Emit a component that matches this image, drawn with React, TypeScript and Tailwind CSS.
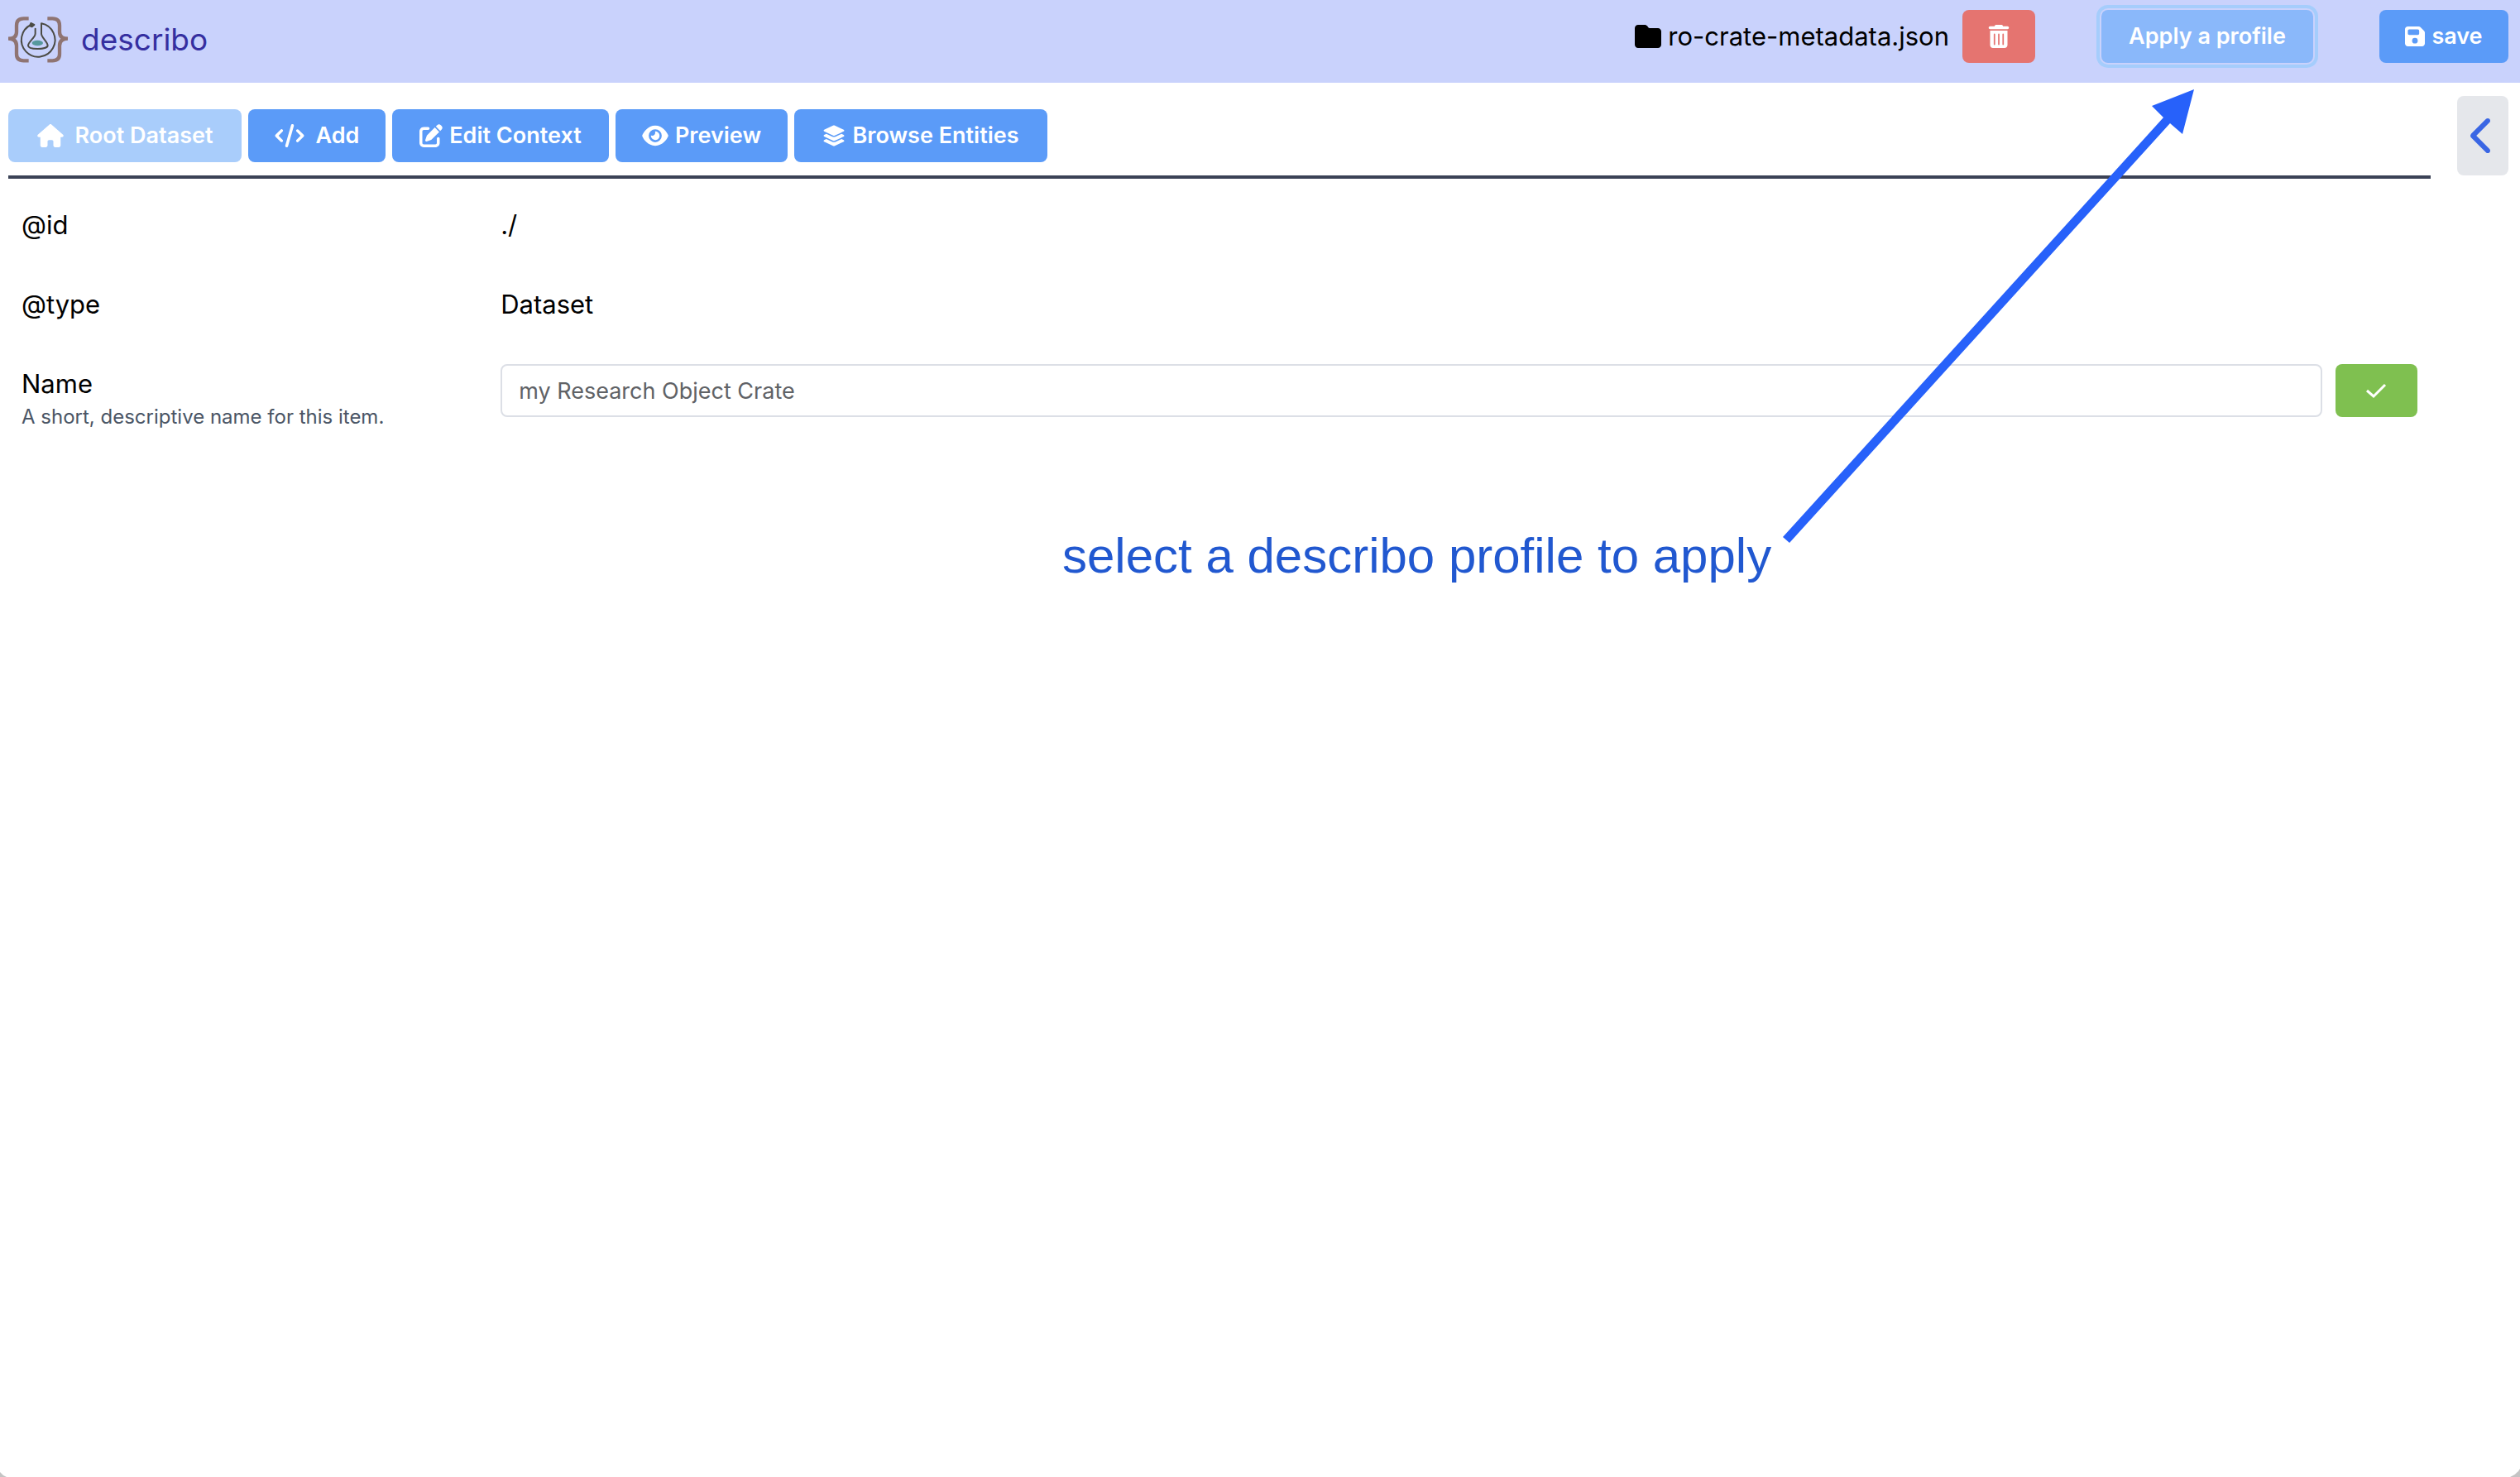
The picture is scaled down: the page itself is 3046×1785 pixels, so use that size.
import type { ReactNode } from "react";
import {
  FaChevronLeft,
  FaCode,
  FaEye,
  FaFloppyDisk,
  FaFolder,
  FaHouse,
  FaLayerGroup,
  FaPenToSquare,
  FaTrashCan,
} from "react-icons/fa6";

function Logo() {
  return (
    <svg viewBox="0 0 216 168" className="h-14 w-[72px]" fill="none" aria-hidden="true">
      <g stroke="#8f7472" strokeWidth="13">
        <path d="M74 7H56Q30 7 30 32V56Q30 80 0 80Q30 80 30 106V136Q30 160 56 160H74" />
        <path d="M142 7H160Q186 7 186 32V56Q186 80 216 80Q186 80 186 106V136Q186 160 160 160H142" />
      </g>
      <g stroke="#4b4b45" strokeWidth="6" strokeLinecap="round" strokeLinejoin="round">
        <path d="M82 30A61 61 0 1 0 120 25V62C120 76 143 92 143 105C143 113 125 117 106 117C88 117 72 113 72 105C72 92 98 76 98 62V44" />
        <path d="M82 24L94 30L86 37L78 34Z" fill="#4b4b45" />
      </g>
      <ellipse cx="106" cy="96" rx="20" ry="10" fill="#56989c" />
    </svg>
  );
}

function ToolButton({
  icon,
  children,
  width,
  wide = false,
  disabled = false,
}: {
  icon: ReactNode;
  children: ReactNode;
  width: string;
  wide?: boolean;
  disabled?: boolean;
}) {
  return (
    <button
      type="button"
      disabled={disabled}
      className={`flex h-16 items-center justify-center rounded-lg text-[27px] font-semibold text-white ${width} ${
        wide ? "gap-3.5" : "gap-2"
      } ${disabled ? "bg-[#a9cdfb]" : "bg-[#5b9bf8]"}`}
    >
      {icon}
      {children}
    </button>
  );
}

function Row({ label, help, htmlFor, children }: { label: string; help?: string; htmlFor?: string; children: ReactNode }) {
  return (
    <div className="flex px-4 py-6">
      <div className="w-1/5">
        <label htmlFor={htmlFor} className="block leading-[48px]">
          {label}
        </label>
        {help && <p className="text-2xl leading-8 text-gray-600">{help}</p>}
      </div>
      <div className="w-4/5 leading-[48px]">{children}</div>
    </div>
  );
}

export default function App() {
  return (
    <div className="relative min-h-screen overflow-hidden bg-white font-[Inter,sans-serif] text-[31px] text-black">
      <header className="flex h-[100px] items-start bg-[#c9d2fc] pr-[14px] pl-[10px] pt-3">
        <div className="flex items-center gap-4 pt-2">
          <Logo />
          <h1 className="text-[37px] leading-[56px] text-[#352fa0]">describo</h1>
        </div>
        <div className="ml-auto flex items-center">
          <FaFolder className="mr-2 size-8" />
          <span>ro-crate-metadata.json</span>
          <button
            type="button"
            aria-label="Delete file"
            className="ml-4 flex h-16 w-[88px] items-center justify-center rounded-lg bg-[#e57470] text-white"
          >
            <FaTrashCan className="size-7" />
          </button>
          <button
            type="button"
            className="ml-20 h-16 w-64 rounded-lg bg-[#8ab8fa] text-[27px] font-semibold text-white outline-4 outline-offset-2 outline-[#a5cdfc]"
          >
            Apply a profile
          </button>
          <button
            type="button"
            className="ml-20 flex h-16 w-[156px] items-center justify-center gap-2 rounded-lg bg-[#5b9bf8] text-[27px] font-semibold text-white"
          >
            <FaFloppyDisk className="h-7 w-6" />
            save
          </button>
        </div>
      </header>

      <main className="flex items-start gap-8 pt-4 pr-[14px] pl-[10px]">
        <div className="min-w-0 flex-1">
          <nav className="flex gap-2 border-b-4 border-[#3b4256] pt-4 pb-4">
            <ToolButton icon={<FaHouse className="h-7 w-8" />} width="w-[282px]" wide disabled>
              Root Dataset
            </ToolButton>
            <ToolButton icon={<FaCode className="h-7 w-9" />} width="w-[166px]" wide>
              Add
            </ToolButton>
            <ToolButton icon={<FaPenToSquare className="size-7" />} width="w-[262px]">
              Edit Context
            </ToolButton>
            <ToolButton icon={<FaEye className="h-7 w-8" />} width="w-[208px]">
              Preview
            </ToolButton>
            <ToolButton icon={<FaLayerGroup className="size-7" />} width="w-[306px]">
              Browse Entities
            </ToolButton>
          </nav>
          <div className="pt-2">
            <Row label="@id">./</Row>
            <Row label="@type">Dataset</Row>
            <Row label="Name" help="A short, descriptive name for this item." htmlFor="name">
              <div className="flex gap-4">
                <input
                  id="name"
                  type="text"
                  defaultValue="my Research Object Crate"
                  className="h-16 min-w-0 flex-1 rounded-lg border-2 border-[#dcdfe6] bg-white px-5 text-[27px] text-[#606266]"
                />
                <button
                  type="button"
                  aria-label="Save name"
                  className="flex h-16 w-[99px] items-center justify-center rounded-lg bg-[#7fc050] text-white"
                >
                  <svg viewBox="0 0 28 28" className="size-7" fill="none" stroke="currentColor" strokeWidth="3" aria-hidden="true">
                    <path d="M3 14L11 21L25 7" />
                  </svg>
                </button>
              </div>
            </Row>
          </div>
        </div>
        <button
          type="button"
          aria-label="Open side panel"
          className="flex h-24 w-[62px] items-center justify-center rounded-lg bg-gray-200 text-[#3a66e4]"
        >
          <FaChevronLeft className="h-12 w-[30px]" />
        </button>
      </main>

      <p className="absolute top-[637px] left-[1284px] font-['Liberation_Sans',sans-serif] text-[60px] leading-[70px] whitespace-nowrap text-[#2158d0]">
        select a describo profile to apply
      </p>
      <svg viewBox="0 0 500 550" className="pointer-events-none absolute top-[108px] left-[2154px] h-[550px] w-[500px]" aria-hidden="true">
        <path d="M1 541L461 34L447 20L498 0L484 54L469 41L9 548Z" fill="#2761fa" />
      </svg>
      <svg viewBox="0 0 8 6" className="absolute bottom-0 left-0 h-1.5 w-2" aria-hidden="true">
        <path d="M0 0Q3 4 8 6H0Z" fill="#c4c4c4" />
      </svg>
      <svg viewBox="0 0 12 10" className="absolute right-0 bottom-0 h-2.5 w-3" aria-hidden="true">
        <path d="M12 0Q8 7 0 10H12Z" fill="#c4c4c4" />
      </svg>
    </div>
  );
}
